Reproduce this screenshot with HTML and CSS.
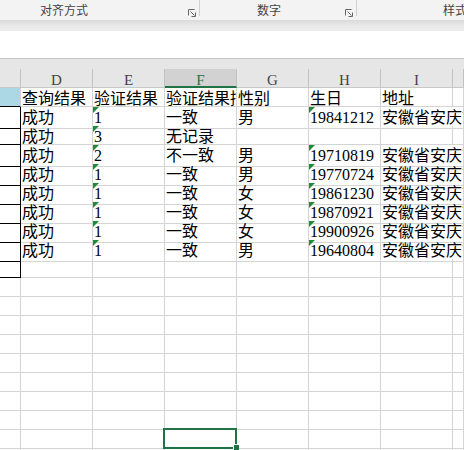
FILE: index.html
```html
<!DOCTYPE html>
<html lang="zh-CN">
<head>
    <meta charset="UTF-8">
    <meta name="viewport" content="width=device-width, initial-scale=1.0">
    <title>核验结果</title>
    <link rel="stylesheet" href="styles.css">
</head>
<body>
    <!-- 功能区分组标题 -->
    <div class="ribbon">
        <div class="group group-align">
            <span class="group-label">对齐方式</span>
            <svg class="launcher" width="8" height="8" viewBox="0 0 8 8">
                <path d="M0.5 6.5V0.5H6.5" />
                <path d="M2.5 2.5L6.5 6.5M7.5 3.5V7.5H3.5" />
            </svg>
        </div>
        <div class="group group-number">
            <span class="group-label">数字</span>
            <svg class="launcher" width="8" height="8" viewBox="0 0 8 8">
                <path d="M0.5 6.5V0.5H6.5" />
                <path d="M2.5 2.5L6.5 6.5M7.5 3.5V7.5H3.5" />
            </svg>
        </div>
        <div class="group group-style">
            <span class="group-label">样式</span>
        </div>
    </div>
    <div class="ribbon-shade"></div>
    <div class="formula-bar"></div>
    <div class="sheet-top"></div>

    <div class="sheet" id="sheet">
        <div class="row head">
            <div class="cell"></div>
            <div class="cell">D</div>
            <div class="cell">E</div>
            <div class="cell active">F</div>
            <div class="cell">G</div>
            <div class="cell">H</div>
            <div class="cell">I</div>
            <div class="cell"></div>
        </div>
        <div class="row">
            <div class="cell c-fill"></div>
            <div class="cell">查询结果</div>
            <div class="cell">验证结果</div>
            <div class="cell">验证结果描述</div>
            <div class="cell">性别</div>
            <div class="cell">生日</div>
            <div class="cell">地址</div>
            <div class="cell"></div>
        </div>
        <div class="row">
            <div class="cell c-box"></div>
            <div class="cell">成功</div>
            <div class="cell flag">1</div>
            <div class="cell">一致</div>
            <div class="cell">男</div>
            <div class="cell flag">19841212</div>
            <div class="cell spill">安徽省安庆市</div>
            <div class="cell"></div>
        </div>
        <div class="row">
            <div class="cell c-box"></div>
            <div class="cell">成功</div>
            <div class="cell flag">3</div>
            <div class="cell">无记录</div>
            <div class="cell"></div>
            <div class="cell"></div>
            <div class="cell"></div>
            <div class="cell"></div>
        </div>
        <div class="row">
            <div class="cell c-box"></div>
            <div class="cell">成功</div>
            <div class="cell flag">2</div>
            <div class="cell">不一致</div>
            <div class="cell">男</div>
            <div class="cell flag">19710819</div>
            <div class="cell spill">安徽省安庆市</div>
            <div class="cell"></div>
        </div>
        <div class="row">
            <div class="cell c-box"></div>
            <div class="cell">成功</div>
            <div class="cell flag">1</div>
            <div class="cell">一致</div>
            <div class="cell">男</div>
            <div class="cell flag">19770724</div>
            <div class="cell spill">安徽省安庆市</div>
            <div class="cell"></div>
        </div>
        <div class="row">
            <div class="cell c-box"></div>
            <div class="cell">成功</div>
            <div class="cell flag">1</div>
            <div class="cell">一致</div>
            <div class="cell">女</div>
            <div class="cell flag">19861230</div>
            <div class="cell spill">安徽省安庆市</div>
            <div class="cell"></div>
        </div>
        <div class="row">
            <div class="cell c-box"></div>
            <div class="cell">成功</div>
            <div class="cell flag">1</div>
            <div class="cell">一致</div>
            <div class="cell">女</div>
            <div class="cell flag">19870921</div>
            <div class="cell spill">安徽省安庆市</div>
            <div class="cell"></div>
        </div>
        <div class="row">
            <div class="cell c-box"></div>
            <div class="cell">成功</div>
            <div class="cell flag">1</div>
            <div class="cell">一致</div>
            <div class="cell">女</div>
            <div class="cell flag">19900926</div>
            <div class="cell spill">安徽省安庆市</div>
            <div class="cell"></div>
        </div>
        <div class="row">
            <div class="cell c-box"></div>
            <div class="cell">成功</div>
            <div class="cell flag">1</div>
            <div class="cell">一致</div>
            <div class="cell">男</div>
            <div class="cell flag">19640804</div>
            <div class="cell spill">安徽省安庆市</div>
            <div class="cell"></div>
        </div>
    </div>

    <script>
        // 补齐下面的空白行（第10行到第20行）
        const sheet = document.getElementById('sheet');
        for (let r = 10; r <= 20; r++) {
            const row = document.createElement('div');
            row.className = 'row';
            for (let c = 0; c < 8; c++) {
                const cell = document.createElement('div');
                cell.className = 'cell';
                if (c === 0 && r === 10) {
                    cell.classList.add('c-box');
                }
                // 当前选中的单元格 F19
                if (c === 3 && r === 19) {
                    cell.classList.add('selected');
                }
                row.appendChild(cell);
            }
            sheet.appendChild(row);
        }
    </script>
</body>
</html>
```

FILE: styles.css
```css
body {
    margin: 0;
    width: 464px;
    overflow: hidden;
    background: #fff;
    font-family: "Noto Sans CJK SC", sans-serif;
}
.ribbon {
    display: flex;
    height: 20px;
    background: #f3f3f3;
    overflow: hidden;
}
.group {
    display: flex;
    align-items: flex-start;
    flex: none;
    box-sizing: border-box;
    height: 16px;
    border-right: 1px solid #d0d0d0;
}
.group-align {
    width: 200px;
    padding-left: 40px;
}
.group-number {
    width: 157px;
    padding-left: 57px;
}
.group-style {
    flex: 1;
    padding-left: 86px;
    border-right: none;
}
.group-label {
    font-size: 12px;
    line-height: 20px;
    color: #444;
    white-space: nowrap;
}
.launcher {
    margin: 9px 3px 0 auto;
    fill: none;
    stroke: #666;
    stroke-width: 1;
}
.ribbon-shade {
    height: 11px;
    background: linear-gradient(#d9d9d9, #e8e8e8 45%, #ededed);
}
.formula-bar {
    height: 27px;
    background: #fff;
    border-bottom: 1px solid #c6c6c6;
}
.sheet-top {
    height: 10px;
    background: #e6e6e6;
}
.row {
    display: grid;
    grid-template-columns: 21px repeat(6, 72px) 1fr;
    height: 19px;
}
.cell {
    position: relative;
    box-sizing: border-box;
    padding-left: 1px;
    border-right: 1px solid #d4d4d4;
    border-bottom: 1px solid #d4d4d4;
    font: 16px/21px "Liberation Serif", "Noto Sans CJK SC", serif;
    color: #000;
    white-space: nowrap;
    overflow: hidden;
}
.head .cell {
    padding: 0;
    background: #e6e6e6;
    border-right-color: #c2c2c2;
    border-bottom-color: #c8c8c8;
    font-size: 15px;
    line-height: 22px;
    text-align: center;
    color: #444;
}
.head .cell.active {
    background: #d2d2d2;
    color: #217346;
    border-bottom: 2px solid #217346;
}
.c-fill {
    background: #acd8e5;
    border-bottom-color: #000;
}
.c-box {
    border-right-color: #000;
    border-bottom-color: #000;
}
/* 文本格式数字的绿色小三角 */
.flag::before {
    content: "";
    position: absolute;
    top: 0;
    left: 0;
    border-top: 6px solid #1e8b3c;
    border-right: 6px solid transparent;
}
.spill {
    overflow: visible;
    border-right-color: transparent;
}
.selected {
    overflow: visible;
    z-index: 1;
}
.selected::after {
    content: "";
    position: absolute;
    top: -2px;
    left: -2px;
    right: -1px;
    bottom: -1px;
    border: 2px solid #217346;
}
.selected::before {
    content: "";
    position: absolute;
    right: -3px;
    bottom: -2px;
    width: 5px;
    height: 5px;
    background: #217346;
    box-shadow: -1px -1px 0 #fff;
    z-index: 2;
}
```
